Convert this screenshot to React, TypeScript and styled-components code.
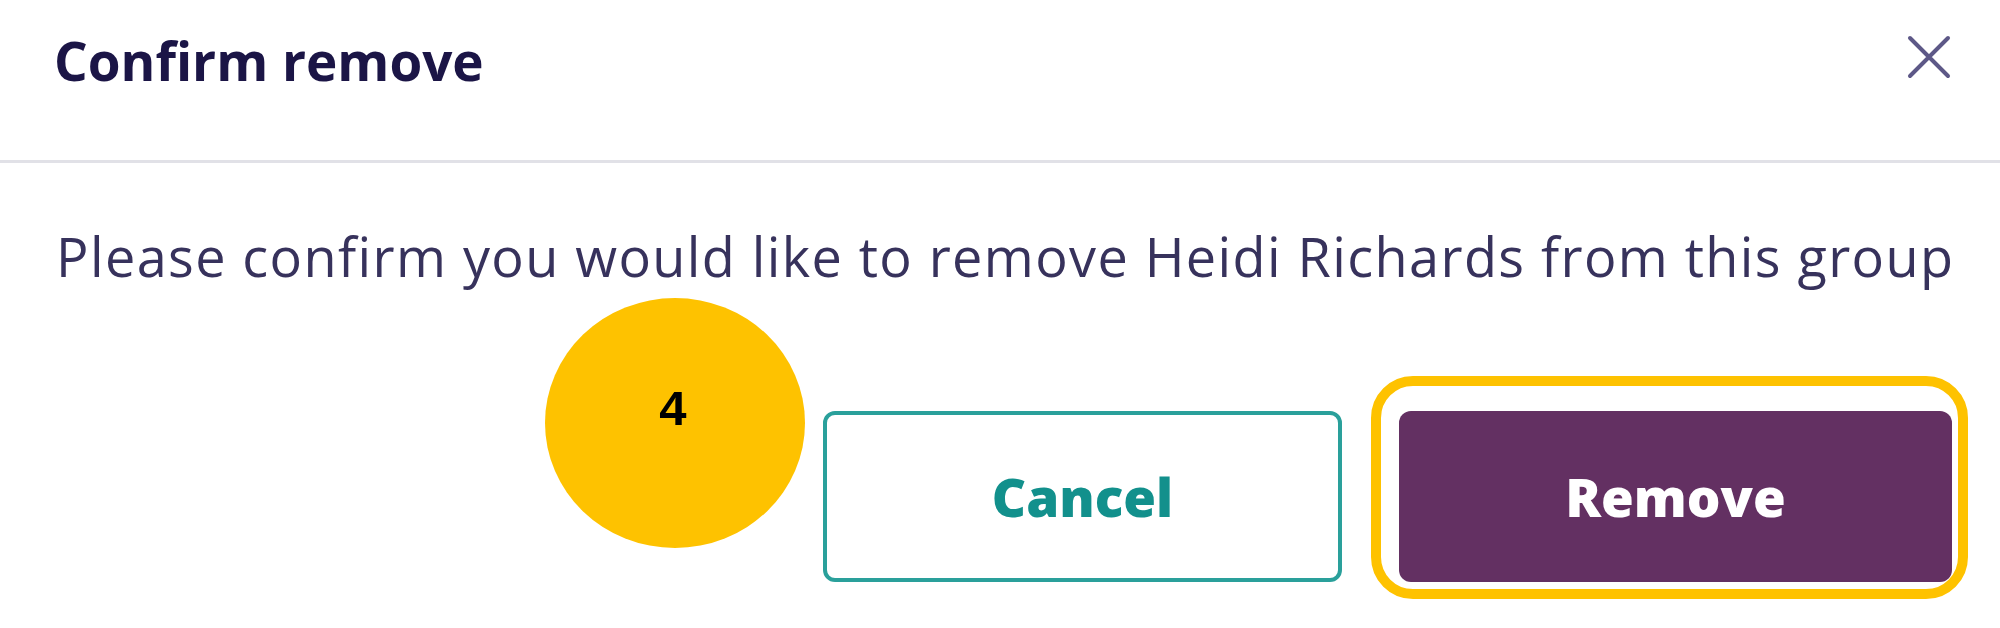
import React from 'react';
import styled, { createGlobalStyle } from 'styled-components';

const GlobalStyle = createGlobalStyle`
    html, body {
        margin: 0;
        padding: 0;
        background: #ffffff;
    }
    body {
        font-family: "Open Sans", "Liberation Sans", sans-serif;
    }
`

type ButtonPropsType = {
    label: string
    variant: 'outline' | 'solid'
}

const CloseIcon = () => (
    <svg width="44" height="44" viewBox="0 0 44 44" fill="none">
        <path d="M3 3L41 41M41 3L3 41" stroke="#5d5887" strokeWidth="4" strokeLinecap="round" />
    </svg>
)

const DialogButton = (props: ButtonPropsType) => {
    return <StyledButton $variant={props.variant}>{props.label}</StyledButton>
}

export default function App() {
    return (
        <>
            <GlobalStyle />
            <Dialog>
                <Header>
                    <Title>Confirm remove</Title>
                    <CloseButton aria-label="Close">
                        <CloseIcon />
                    </CloseButton>
                </Header>
                <Message>Please confirm you would like to remove Heidi Richards from this group</Message>
                <Footer>
                    <StepBadge>
                        <StepNumber>4</StepNumber>
                    </StepBadge>
                    <CancelSlot>
                        <DialogButton label="Cancel" variant="outline" />
                    </CancelSlot>
                    <FocusRing>
                        <DialogButton label="Remove" variant="solid" />
                    </FocusRing>
                </Footer>
            </Dialog>
        </>
    );
}

const Dialog = styled.div`
    width: 2000px;
    height: 628px;
    display: flex;
    flex-direction: column;
    background: #ffffff;
    overflow: hidden;
`
const Header = styled.div`
    box-sizing: border-box;
    height: 163px;
    display: flex;
    align-items: flex-start;
    justify-content: space-between;
    padding: 34px 49px 0 54px;
    border-bottom: 3px solid #e1e1e7;
`
const Title = styled.h2`
    margin: 0;
    font-size: 53px;
    line-height: 53px;
    font-weight: 700;
    color: #1b1546;
`
const CloseButton = styled.button`
    margin-top: 1px;
    padding: 0;
    border: none;
    background: none;
    width: 44px;
    height: 44px;
    display: flex;
`
const Message = styled.p`
    margin: 66px 0 0;
    padding-left: 56px;
    font-size: 54px;
    line-height: 54px;
    letter-spacing: 1.4px;
    color: #37325c;
`
const Footer = styled.div`
    position: relative;
    margin-top: 93px;
    display: flex;
    justify-content: flex-end;
    align-items: flex-start;
    gap: 29px;
    padding-right: 32px;
`
const StepBadge = styled.div`
    position: absolute;
    left: 545px;
    top: -78px;
    width: 260px;
    height: 250px;
    border-radius: 50%;
    background: #fec200;
    display: flex;
    justify-content: center;
    padding-top: 86px;
    box-sizing: border-box;
`
const StepNumber = styled.span`
    font-family: "Liberation Sans", Arial, sans-serif;
    font-weight: 700;
    font-size: 49px;
    line-height: 48px;
    color: #000000;
    margin-left: -4px;
`
const CancelSlot = styled.div`
    margin-top: 35px;
`
const FocusRing = styled.div`
    border: 10px solid #fec200;
    border-radius: 42px;
    padding: 25px 6px 7px 18px;
`
const StyledButton = styled.button<{ $variant: 'outline' | 'solid' }>`
    box-sizing: border-box;
    width: ${p => (p.$variant === 'outline' ? '519px' : '553px')};
    height: 171px;
    border-radius: 12px;
    font-family: "Open Sans", "Liberation Sans", sans-serif;
    font-size: 53px;
    font-weight: 800;
    display: flex;
    align-items: center;
    justify-content: center;
    padding: 0;
    border: ${p => (p.$variant === 'outline' ? '4px solid #2aa09b' : 'none')};
    background: ${p => (p.$variant === 'outline' ? '#ffffff' : '#633062')};
    color: ${p => (p.$variant === 'outline' ? '#12908c' : '#ffffff')};
`
